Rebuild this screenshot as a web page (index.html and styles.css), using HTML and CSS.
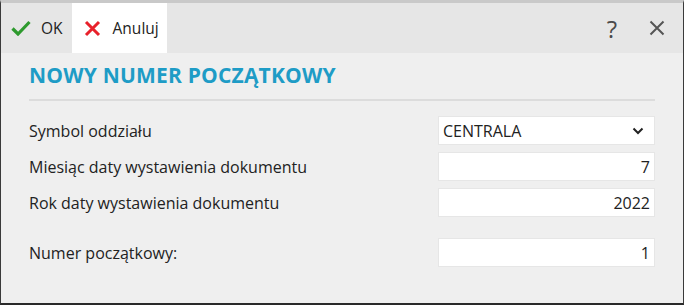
FILE: index.html
```html
<!DOCTYPE html>
<html lang="pl">
<head>
  <meta charset="UTF-8" />
  <title>Nowy numer początkowy</title>
  <link rel="stylesheet" href="styles.css">
</head>
<body>
  <div class="window">
    <div class="toolbar">
      <button class="tool">
        <svg width="20" height="16" viewBox="0 0 20 16"><path d="M1.5 8.5 L7 14 L18.5 2" fill="none" stroke="#2e9a2e" stroke-width="3.2"/></svg>
        OK
      </button>
      <button class="tool active">
        <svg width="17" height="17" viewBox="0 0 17 17"><path d="M2 2 L15 15 M15 2 L2 15" fill="none" stroke="#e8212b" stroke-width="3"/></svg>
        Anuluj
      </button>
      <div class="spacer"></div>
      <span class="win-btn help">?</span>
      <span class="win-btn">
        <svg width="16" height="16" viewBox="0 0 16 16"><path d="M1.5 1.5 L14.5 14.5 M14.5 1.5 L1.5 14.5" fill="none" stroke="#555" stroke-width="2"/></svg>
      </span>
    </div>
    <div class="content">
      <h1>NOWY NUMER POCZĄTKOWY</h1>
      <div class="row">
        <label>Symbol oddziału</label>
        <div class="field select">
          <span>CENTRALA</span>
          <svg width="12" height="8" viewBox="0 0 12 8"><path d="M1.5 1.5 L6 6 L10.5 1.5" fill="none" stroke="#222" stroke-width="2"/></svg>
        </div>
      </div>
      <div class="row">
        <label>Miesiąc daty wystawienia dokumentu</label>
        <div class="field num">7</div>
      </div>
      <div class="row">
        <label>Rok daty wystawienia dokumentu</label>
        <div class="field num">2022</div>
      </div>
      <div class="row last">
        <label>Numer początkowy:</label>
        <div class="field num">1</div>
      </div>
    </div>
  </div>
</body>
</html>
```

FILE: styles.css
```css
* {
  box-sizing: border-box;
}
body {
  margin: 0;
  font-family: 'Open Sans', 'Noto Sans', sans-serif;
  color: #222;
}
.window {
  width: 684px;
  height: 305px;
  border: 1px solid #3a3a3a;
  border-top: 3px solid #c9c9c9;
  border-bottom: 2px solid #2a2a2a;
  background-color: #efefef;
}
.toolbar {
  display: flex;
  align-items: center;
  height: 50px;
  background-color: #e6e6e6;
}
.tool {
  display: flex;
  align-items: center;
  gap: 10px;
  height: 100%;
  padding: 0 9px 0 10px;
  border: none;
  background: transparent;
  font-family: inherit;
  font-size: 15.5px;
  color: #222;
}
.tool.active {
  background-color: #fff;
  padding: 0 8px 0 12px;
  gap: 12px;
}
.spacer {
  flex: 1;
}
.win-btn {
  display: flex;
  align-items: center;
  justify-content: center;
  width: 24px;
  margin-right: 14px;
  color: #4a4a4a;
}
.win-btn.help {
  font-size: 24px;
  margin-right: 21px;
}
.content {
  padding: 8px 28px 0 28px;
}
h1 {
  margin: 0;
  padding-bottom: 10px;
  border-bottom: 2px solid #dcdcdc;
  color: #1e9cc6;
  font-size: 21px;
  font-weight: 700;
  letter-spacing: 0.2px;
}
.row {
  display: flex;
  align-items: center;
  justify-content: space-between;
  margin-top: 7px;
  font-size: 16px;
}
.row:first-of-type {
  margin-top: 15px;
}
.row.last {
  margin-top: 21px;
}
.field {
  display: flex;
  align-items: center;
  width: 217px;
  height: 29px;
  padding: 0 4px;
  background-color: #fff;
  border: 1px solid #e6e6e6;
}
.field.num {
  justify-content: flex-end;
}
.field.select {
  justify-content: space-between;
  padding-right: 10px;
}
```
